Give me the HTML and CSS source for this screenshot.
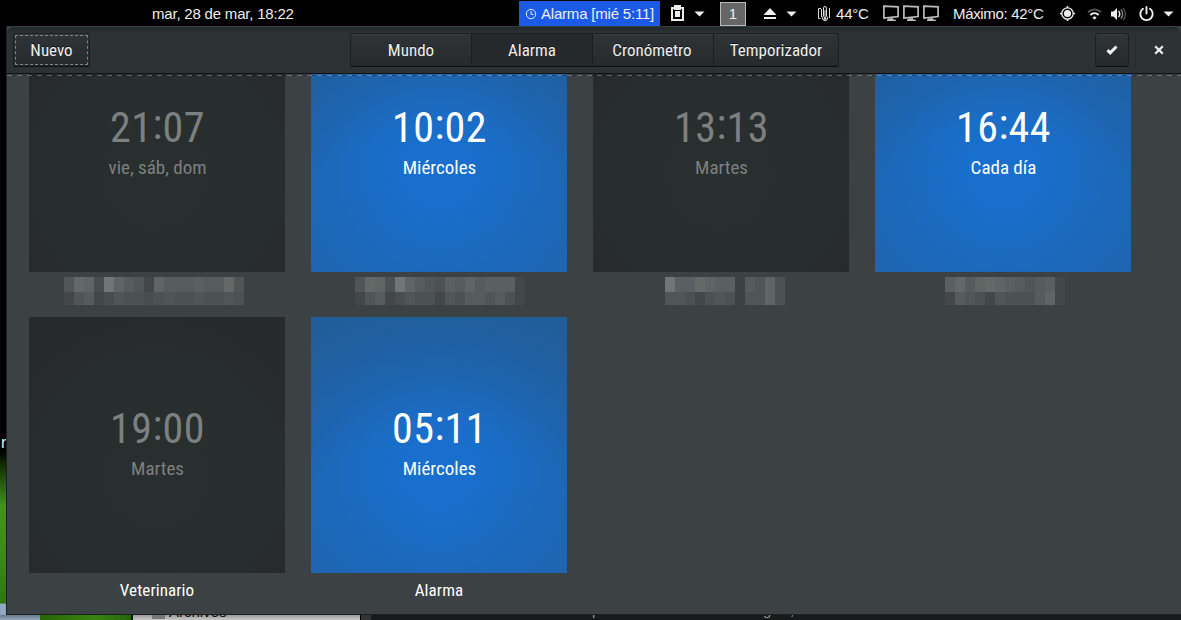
FILE: index.html
```
<!DOCTYPE html>
<html lang="es">
<head>
<meta charset="utf-8">
<title>Relojes</title>
<link rel="stylesheet" href="styles.css">
</head>
<body>
<div class="desktop">
  <header class="panel">
    <span class="date">mar, 28 de mar, 18:22</span>
    <span class="next-alarm"><svg width="12" height="12" viewBox="0 0 12 12" fill="none" stroke="#e6ecff"><circle cx="6" cy="6" r="4.7"/><path d="M6 3v3.3h2.6"/></svg><span class="fit">Alarma [mié 5:11]</span></span>
    <svg width="13" height="17" viewBox="0 0 13 17"><path fill="#eee" fill-rule="evenodd" d="M0 2h3V0h7v2h3v14H0zM2 4v10h9V4h-1v1H3V4z"/><path fill="#eee" d="M4 6h5v6H4z"/></svg>
    <svg width="12" height="6" viewBox="0 0 12 6"><path fill="#eee" d="M0.5 0.5h10L5.5 5.5z"/></svg>
    <span class="workspace">1</span>
    <svg width="14" height="13" viewBox="0 0 14 13"><path fill="#eee" d="M7 1l6.5 7H.5zM1 10h12v2H1z"/></svg>
    <svg width="12" height="6" viewBox="0 0 12 6"><path fill="#eee" d="M0.5 0.5h10L5.5 5.5z"/></svg>
    <svg width="13" height="16" viewBox="0 0 13 16" fill="none" stroke="#ddd"><path d="M3 2.5H.5v10h2M3.500 3v8M5.500 10V2a1.500 1.500 0 0 1 3 0v8a2.600 2.600 0 1 1-3 0zM11.500 2v10"/><path d="M7 4v8"/><circle cx="7" cy="12.500" r="1" fill="#ddd"/></svg>
    <span>44°C</span>
    <svg width="57" height="17" viewBox="0 0 57 17"><g id="mon"><path fill="none" stroke="#bbb" stroke-width="1.700" d="M.9 1.200l14.200.6v9.700L.9 13z"/><path fill="#bbb" d="M5 13.500l5-.5v1.200l3 .8v1H4v-1z"/></g><use href="#mon" x="20"/><use href="#mon" x="40"/></svg>
    <span>Máximo: 42°C</span>
    <svg width="15" height="15" viewBox="0 0 15 15"><circle cx="7.500" cy="7.500" r="3.600" fill="#eee"/><circle cx="7.500" cy="7.500" r="5.700" fill="none" stroke="#eee" stroke-width="1.300"/><path stroke="#eee" stroke-width="1.600" d="M7.500 0v2M7.500 13v2M0 7.500h2M13 7.500h2"/></svg>
    <svg width="15" height="12" viewBox="0 0 15 12" fill="none" stroke-width="1.900"><path stroke="#555" d="M1 4.200c4-3.600 9-3.600 13 0"/><path stroke="#eee" d="M3.300 7c2.500-2.300 6-2.300 8.400 0"/><path fill="#eee" d="M7.500 8.200l2.200 1.300-2.200 2.200-2.200-2.200z"/></svg>
    <svg width="16" height="14" viewBox="0 0 16 14" fill="none"><path fill="#eee" d="M0 4.500h2.500L6 1v12L2.500 9.500H0z"/><path stroke="#eee" stroke-width="1.500" d="M7.500 4c1.700 1.700 1.700 4.300 0 6"/><path stroke="#888" stroke-width="1.300" d="M9.800 2.500c2.500 2.500 2.500 6.500 0 9"/><path stroke="#555" stroke-width="1.300" d="M12 1c3.300 3.300 3.300 8.700 0 12"/></svg>
    <svg width="15" height="16" viewBox="0 0 15 16" fill="none" stroke="#eee" stroke-width="1.900" stroke-linecap="round"><path d="M4 2.800a6.200 6.200 0 1 0 7 0M7.500 1v6.500"/></svg>
    <svg width="12" height="6" viewBox="0 0 12 6"><path fill="#eee" d="M0.500 0.500h10L5.500 5.500z"/></svg>
  </header>

  <div class="work">
    <aside class="wallpaper"><span>r</span></aside>
    <main class="window">
      <div class="titlebar">
        <button class="btn new"><span>Nuevo</span></button>
        <nav class="tabs">
          <button class="tab">Mundo</button>
          <button class="tab active">Alarma</button>
          <button class="tab">Cronómetro</button>
          <button class="tab">Temporizador</button>
        </nav>
        <div class="actions">
          <button class="btn check"><svg width="12" height="10" viewBox="0 0 12 10"><path fill="none" stroke="#eee" stroke-width="3" d="M1.500 5.200l2.700 2.600L10.500 1.500"/></svg></button>
          <button class="close"><svg width="10" height="10" viewBox="0 0 10 10"><path stroke="#eee" stroke-width="2.300" d="M1.200 1.200l7.600 7.600M8.800 1.200L1.200 8.800"/></svg></button>
        </div>
      </div>
      <div class="scroll">
        <div class="grid">
          <article class="alarm"><div class="tile"><span class="time">21<b>:</b>07</span><span class="days">vie, sáb, dom</span></div>
            <div class="mosaic m1"><i class="d"></i><i class="h"></i><i class="g"></i><i class="b"></i><i class="i"></i><i class="g"></i><i class="e"></i><i class="d"></i><i class="a"></i><i class="g"></i><i class="e"></i><i class="e"></i><i class="e"></i><i class="f"></i><i class="e"></i><i class="e"></i><i class="h"></i><i class="d"></i><i class="a"></i><i class="d"></i><i class="e"></i><i class="a"></i><i class="b"></i><i class="d"></i><i class="c"></i><i class="c"></i><i class="b"></i><i class="c"></i><i class="d"></i><i class="c"></i><i class="c"></i><i class="d"></i><i class="c"></i><i class="c"></i><i class="d"></i><i class="c"></i></div></article>
          <article class="alarm on"><div class="tile"><span class="time">10<b>:</b>02</span><span class="days">Miércoles</span></div>
            <div class="mosaic m2"><i class="d"></i><i class="h"></i><i class="g"></i><i class="c"></i><i class="i"></i><i class="g"></i><i class="e"></i><i class="d"></i><i class="c"></i><i class="f"></i><i class="e"></i><i class="g"></i><i class="e"></i><i class="f"></i><i class="f"></i><i class="f"></i><i class="a"></i><i class="a"></i><i class="d"></i><i class="e"></i><i class="a"></i><i class="b"></i><i class="d"></i><i class="c"></i><i class="c"></i><i class="a"></i><i class="d"></i><i class="c"></i><i class="e"></i><i class="e"></i><i class="d"></i><i class="e"></i><i class="c"></i><i class="a"></i></div></article>
          <article class="alarm"><div class="tile"><span class="time">13<b>:</b>13</span><span class="days">Martes</span></div>
            <div class="mosaic m3"><i class="i"></i><i class="f"></i><i class="f"></i><i class="h"></i><i class="g"></i><i class="f"></i><i class="f"></i><i></i><i class="e"></i><i class="d"></i><i class="g"></i><i class="c"></i><i class="d"></i><i class="d"></i><i class="c"></i><i class="a"></i><i class="c"></i><i class="d"></i><i class="c"></i><i></i><i class="d"></i><i class="d"></i><i class="g"></i><i class="c"></i></div></article>
          <article class="alarm on"><div class="tile"><span class="time">16<b>:</b>44</span><span class="days">Cada día</span></div>
            <div class="mosaic m4"><i class="f"></i><i class="h"></i><i class="e"></i><i class="g"></i><i class="h"></i><i class="g"></i><i class="f"></i><i class="e"></i><i class="d"></i><i class="e"></i><i class="f"></i><i class="a"></i><i class="a"></i><i class="e"></i><i class="d"></i><i class="c"></i><i class="a"></i><i class="d"></i><i class="c"></i><i class="c"></i><i class="c"></i><i class="e"></i><i class="g"></i><i class="a"></i></div></article>
          <article class="alarm"><div class="tile"><span class="time">19<b>:</b>00</span><span class="days">Martes</span></div><p class="name">Veterinario</p></article>
          <article class="alarm on"><div class="tile"><span class="time">05<b>:</b>11</span><span class="days">Miércoles</span></div><p class="name">Alarma</p></article>
        </div>
      </div>
    </main>
  </div>

  <footer class="behind">
    <div class="sky"></div><div class="grass"></div>
    <div class="files"><span class="drive"></span><span class="files-label">Archivos</span></div>
    <div class="edge"></div>
    <div class="terminal"><span class="p">p</span><span class="g-text">g</span><span>,</span></div>
  </footer>
</div>
</body>
</html>
```
FILE: styles.css
```
* { box-sizing: border-box; }
body { margin: 0; background: #000; }
button { font: inherit; color: inherit; padding: 0; border: 0; background: none; }
svg { display: block; }

.desktop {
  width: 1181px; height: 620px; overflow: hidden;
  display: grid; grid-template-rows: 26px 589px 5px;
  font-family: "Roboto Condensed", Roboto, sans-serif;
  font-stretch: 75%; color: #eee;
}

/* Top panel */
.panel {
  display: grid; align-items: center; white-space: nowrap;
  grid-template-columns: 367px 152px 23px 26px 43px 23px 32px 18px 47px 70px 107px 27px 24px 28px 24px 12px;
  padding-left: 152px; background: #000; height: 26px;
  font: 15px/26px "Liberation Sans", Arial, sans-serif; color: #eee;
}
.panel > span:not(.workspace) { padding-top: 1px; letter-spacing: -.2px; }
.panel > .date { letter-spacing: -.35px; }
.panel > .next-alarm { display: flex; align-items: center; gap: 4px; width: 141px; height: 26px; padding: 1px 0 0 6px; background: #1b5ae6; }
.panel > span:nth-of-type(n+5) { letter-spacing: -.33px; }
.workspace { width: 26px; height: 24px; line-height: 22px; text-align: center; background: #666; border: 1px solid #bbb; }

/* Window */
.work { display: grid; grid-template-columns: 7px 1174px; }
.wallpaper {
  background: linear-gradient(#000 0 425px, #183d08 445px, #469118 480px, #3f8a14 530px, #2f760b 577px, #91a8bd 578px);
  border-right: 1px solid #1b2022; overflow: hidden;
  font: 16px/20px "Liberation Sans", Arial, sans-serif; padding: 407px 0 0 1px;
}
.window { background: #3c4143; border-top: 1px solid #333f3b; border-bottom: 1px solid #1c2021; overflow: hidden; }
.titlebar {
  height: 47px; padding: 6px 0 7px 7px; display: grid; align-items: start;
  grid-template-columns: 336px 489px 1fr;
  background: linear-gradient(#232729, #2d3234 6px, #2c3133);
  border-bottom: 1px solid #111414; border-radius: 7px 7px 0 0;
  font-size: 17px;
}
.btn, .tabs { background: linear-gradient(#2f3436, #262a2c); border: 1px solid #1b1f20; border-bottom-color: #0d0f10; border-radius: 3px; box-shadow: inset 0 1px #373d3f; }
.btn { display: grid; place-items: center; height: 34px; }
.new { width: 77px; margin-left: -1px; outline: 1px dashed #7d8283; outline-offset: -3px; text-shadow: 0 -1px #111; }
.tabs { display: grid; grid-template-columns: 121px 121px 121px 124px; height: 34px; }
.tab { border-right: 1px solid #1b1f20; text-shadow: 0 -1px #15181a; line-height: 32px; }
.tab:nth-child(3) { padding-right: 2px; }
.tab:last-child { border: 0; }
.tab.active { background: #25292b; }
.actions { display: flex; justify-content: flex-end; }
.check { width: 34px; }
.close { display: grid; place-items: center; width: 47px; height: 34px; margin-left: 6px; margin-right: -1px; border-left: 1px solid #272b2d; }

/* Alarm grid, scrolled part of a row down */
.scroll { height: 540px; padding: 0 22px; overflow: hidden; position: relative; }
.scroll::before { content: ""; position: absolute; z-index: 1; left: 0; right: 0; top: 1px; height: 1px; background: repeating-linear-gradient(90deg, rgba(190,200,205,.34) 0 5px, rgba(0,0,0,.25) 5px 10px); }
.grid { display: grid; grid-template-columns: repeat(4, 256px); grid-auto-rows: 301px; column-gap: 26px; margin-top: -58px; }
.tile { height: 256px; display: flex; flex-direction: column; align-items: center; justify-content: center; color: #7c8080; background: radial-gradient(circle at 50% 62%, #292f2e, #282d2d 120px, #262a2b 160px); }
.on .tile { color: #fff; background: radial-gradient(circle at 50% 100%, rgba(33,93,154,0) 150px, rgba(33,93,154,.95) 270px), radial-gradient(circle at 50% 60%, #196fcd 30px, #1c68ba 110px, #1e65b0 165px); }
.time { font-size: 42px; line-height: 49px; margin-top: -6px; padding-left: 1px; letter-spacing: .4px; }
.time b { font-weight: inherit; line-height: 0; vertical-align: 3px; }
.days { font-size: 19px; line-height: 24px; margin-top: 4px; padding-left: 1px; }
.name { margin: 6px 0 0; text-align: center; font-size: 17px; line-height: 22px; letter-spacing: .1px; color: #fff; }

/* Pixelated labels */
.mosaic { display: grid; grid-template-rows: 15px 13px; margin-top: 5px; }
.m1 { grid-template-columns: repeat(18, 10px); padding-left: 35px; }
.m2 { grid-template-columns: repeat(17, 10px); padding-left: 44px; }
.m3 { grid-template-columns: repeat(12, 10px); padding-left: 72px; }
.m4 { grid-template-columns: repeat(12, 10px); padding-left: 70px; }
.a { background: #434749; } .b { background: #484d50; } .c { background: #4c5153; }
.d { background: #505557; } .e { background: #565b5d; } .f { background: #5a5f61; }
.g { background: #5f6464; } .h { background: #646968; } .i { background: #707575; }

/* Windows showing below */
.behind { display: grid; grid-template-columns: 40px 91px 229px 11px 1fr; height: 5px; overflow: hidden; font: 15px/16px "Liberation Sans", Arial, sans-serif; }
.behind > div { height: 5px; overflow: hidden; }
.sky { background: linear-gradient(#667988, #91a8bd); }
.grass { background: linear-gradient(90deg, #286506, #398510 60%, #24660a); }
.files { display: flex; gap: 4px; padding-left: 19px; background: linear-gradient(#999, #c8c8c8); border-left: 2px solid #111; color: #111; }
.drive { width: 13px; height: 4px; background: #777; }
.files-label { margin-top: -11px; }
.edge { background: #333; border-left: 1px solid #000; }
.terminal { display: flex; background: #171b1c; padding-left: 221px; color: #999; }
.terminal span { margin-top: -13px; }
.terminal .p { width: 171px; }
.terminal .g-text { width: 27px; }
```
